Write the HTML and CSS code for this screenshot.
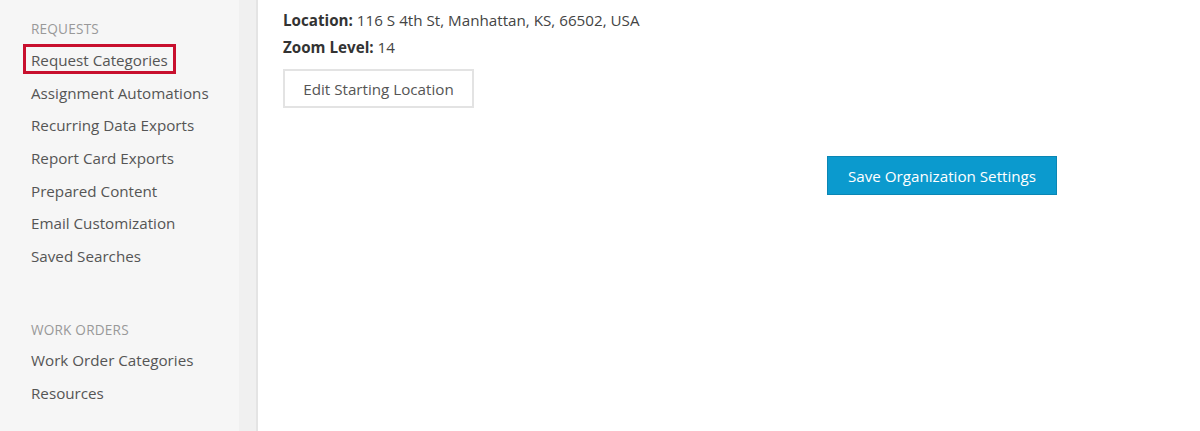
FILE: index.html
```html
<!DOCTYPE html>
<html>
<head>
<meta charset="utf-8">
<link rel="stylesheet" href="styles.css">
</head>
<body>
<div class="layout">
  <aside class="sidebar">
    <div class="group">
      <div class="group-title">REQUESTS</div>
      <a class="nav-item highlighted">Request Categories</a>
      <a class="nav-item">Assignment Automations</a>
      <a class="nav-item">Recurring Data Exports</a>
      <a class="nav-item">Report Card Exports</a>
      <a class="nav-item">Prepared Content</a>
      <a class="nav-item">Email Customization</a>
      <a class="nav-item">Saved Searches</a>
    </div>
    <div class="group group-second">
      <div class="group-title">WORK ORDERS</div>
      <a class="nav-item">Work Order Categories</a>
      <a class="nav-item">Resources</a>
    </div>
  </aside>
  <div class="gutter"></div>
  <main class="content">
    <p class="field"><strong>Location:</strong> 116 S 4th St, Manhattan, KS, 66502, USA</p>
    <p class="field"><strong>Zoom Level:</strong> 14</p>
    <button class="btn btn-default">Edit Starting Location</button>
    <div class="actions">
      <button class="btn btn-primary">Save Organization Settings</button>
    </div>
  </main>
</div>
</body>
</html>
```
FILE: styles.css
```css
html, body {
  margin: 0;
  padding: 0;
  height: 100%;
  background: #fff;
}
body {
  font-family: "Open Sans", "Noto Sans", sans-serif;
  color: #444;
  font-size: 15px;
}
.layout {
  display: flex;
  height: 431px;
  overflow: hidden;
}
.sidebar {
  width: 239px;
  flex: none;
  background: #f6f6f6;
  padding: 19px 0 0 31px;
  box-sizing: border-box;
}
.gutter {
  width: 17px;
  flex: none;
  background: #f0f0f0;
  border-right: 2px solid #e4e4e4;
}
.group-title {
  color: #999;
  font-size: 13.6px;
  letter-spacing: 0.2px;
  line-height: 20px;
  margin-bottom: 8px;
}
.nav-item {
  display: block;
  line-height: 20px;
  padding: 6px 0;
  margin-bottom: 0.7px;
  color: #555;
  font-size: 15.2px;
  width: max-content;
}
.nav-item.highlighted {
  outline: 3px solid #c8102e;
  outline-offset: 0;
  padding: 3px 5px 1px 5px;
  margin: 3px 0 5.7px -5px;
}
.group-second {
  margin-top: 48px;
}
.group-second .group-title {
  margin-bottom: 4px;
}
.content {
  flex: 1;
  padding: 10px 0 0 25px;
}
.field {
  margin: 0 0 7px;
  line-height: 20px;
  font-size: 15.2px;
  color: #444;
}
.field strong {
  color: #333;
  font-weight: 700;
}
.btn {
  font-family: inherit;
  font-size: 15.2px;
  line-height: 20px;
  cursor: pointer;
}
.btn-default {
  margin-top: 5px;
  background: #fff;
  border: 2px solid #e3e3e3;
  color: #555;
  padding: 0;
  width: 191px;
  height: 39px;
}
.actions {
  display: flex;
  margin-top: 48px;
  padding-left: 544px;
}
.btn-primary {
  background: #0b9ace;
  border: 1px solid #0a86b4;
  color: #fff;
  width: 230px;
  height: 39px;
  padding: 0;
}
```
